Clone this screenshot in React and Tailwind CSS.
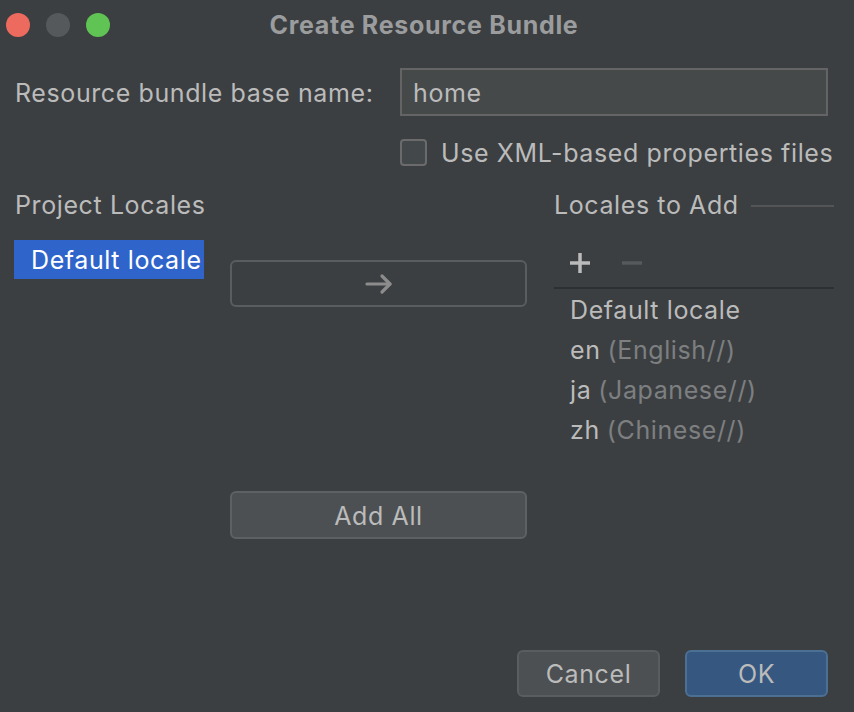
import React, { useState } from 'react';

const locales = [
  { code: 'Default locale', name: '' },
  { code: 'en', name: '(English//)' },
  { code: 'ja', name: '(Japanese//)' },
  { code: 'zh', name: '(Chinese//)' },
];

const ArrowRight = () => (
  <svg width="28" height="22" viewBox="0 0 28 22" fill="none" stroke="#8c8c8c" strokeWidth="3.2" strokeLinecap="round" strokeLinejoin="round">
    <path d="M2 11h23" />
    <path d="M17 3l8 8-8 8" />
  </svg>
);

const App = () => {
  const [baseName, setBaseName] = useState('home');
  const [useXml, setUseXml] = useState(false);

  return (
    <div
      className="w-[854px] h-[712px] bg-[#3c3f41] flex flex-col text-[#bbbbbb] overflow-hidden text-[25px] tracking-[0.6px]"
      style={{ fontFamily: 'Inter, "Noto Sans", sans-serif' }}
    >
      {/* Title bar */}
      <div className="h-[50px] grid grid-cols-[1fr_auto_1fr] items-center">
        <div className="flex items-center gap-[16px] pl-[6px]">
          <span className="w-[24px] h-[24px] rounded-full bg-[#ed6a5e]" />
          <span className="w-[24px] h-[24px] rounded-full bg-[#55595c]" />
          <span className="w-[24px] h-[24px] rounded-full bg-[#5fc454]" />
        </div>
        <div className="text-[25px] font-bold tracking-[0.7px] text-[#9b9c9e] pr-[6px] pt-[1px]">Create Resource Bundle</div>
        <div />
      </div>

      {/* Base name */}
      <div className="flex items-center mt-[18px] pl-[15px]">
        <label className="w-[385px] leading-none pt-[2px]">Resource bundle base name:</label>
        <input
          value={baseName}
          onChange={(e) => setBaseName(e.target.value)}
          className="w-[428px] h-[48px] bg-[#45494a] border-2 border-[#646464] px-[11px] pt-[2px] text-[#bbbbbb] outline-none"
        />
      </div>

      {/* XML checkbox */}
      <label className="flex items-center gap-[14px] ml-[400px] mt-[23px] h-[27px]">
        <span
          onClick={() => setUseXml(!useXml)}
          className="w-[27px] h-[27px] rounded-[4px] border-2 border-[#6b6b6b] bg-[#43494a]"
        />
        <span className="leading-none pt-[1px]">Use XML-based properties files</span>
      </label>

      {/* Locales */}
      <div className="flex mt-[24px]">
        <div className="w-[216px] pl-[14px] flex flex-col">
          <div className="h-[30px] flex items-center pl-[1px] pt-[1px]">Project Locales</div>
          <div className="mt-[20px] w-[190px] h-[39px] bg-[#2f65ca] text-white flex items-center pl-[17px] pt-[2px]">
            Default locale
          </div>
        </div>

        <div className="w-[297px] ml-[14px] flex flex-col pt-[70px]">
          <button className="h-[47px] rounded-[6px] border-2 border-[#5a5d5f] flex items-center justify-center">
            <ArrowRight />
          </button>
          <button className="mt-[184px] h-[48px] rounded-[6px] border-2 border-[#5e6163] bg-[#4c5052] text-[#bbbbbb] pt-[4px]">
            Add All
          </button>
        </div>

        <div className="w-[280px] ml-[27px] flex flex-col">
          <div className="h-[30px] flex items-center gap-[12px] pt-[1px]">
            <span>Locales to Add</span>
            <span className="flex-1 h-[2px] bg-[#535557]" />
          </div>
          <div className="mt-[14px] h-[53px] flex items-center gap-[32px] pl-[16px] pt-[4px]">
            <svg width="20" height="20" viewBox="0 0 20 20" stroke="#bbbbbb" strokeWidth="3.5">
              <path d="M10 0v20M0 10h20" />
            </svg>
            <svg width="20" height="20" viewBox="0 0 20 20" stroke="#565a5c" strokeWidth="3.5">
              <path d="M0 10h20" />
            </svg>
          </div>
          <div className="h-[2px] bg-[#2e2f30]" />
          <div className="flex flex-col pl-[16px] pt-[2px]">
            {locales.map((l) => (
              <div key={l.code} className="h-[40px] flex items-center gap-[7px]">
                <span>{l.code}</span>
                {l.name && <span className="text-[#7d7f81]">{l.name}</span>}
              </div>
            ))}
          </div>
        </div>
      </div>

      {/* Footer */}
      <div className="mt-auto mb-[15px] flex justify-end gap-[25px] pr-[26px]">
        <button className="w-[143px] h-[47px] rounded-[6px] border-2 border-[#5a5d5f] bg-[#4c5052] text-[#bbbbbb] pt-[3px]">
          Cancel
        </button>
        <button className="w-[143px] h-[47px] rounded-[6px] border-2 border-[#4c6f94] bg-[#365880] text-[#bbbbbb] pt-[3px]">
          OK
        </button>
      </div>
    </div>
  );
};

export default App;
